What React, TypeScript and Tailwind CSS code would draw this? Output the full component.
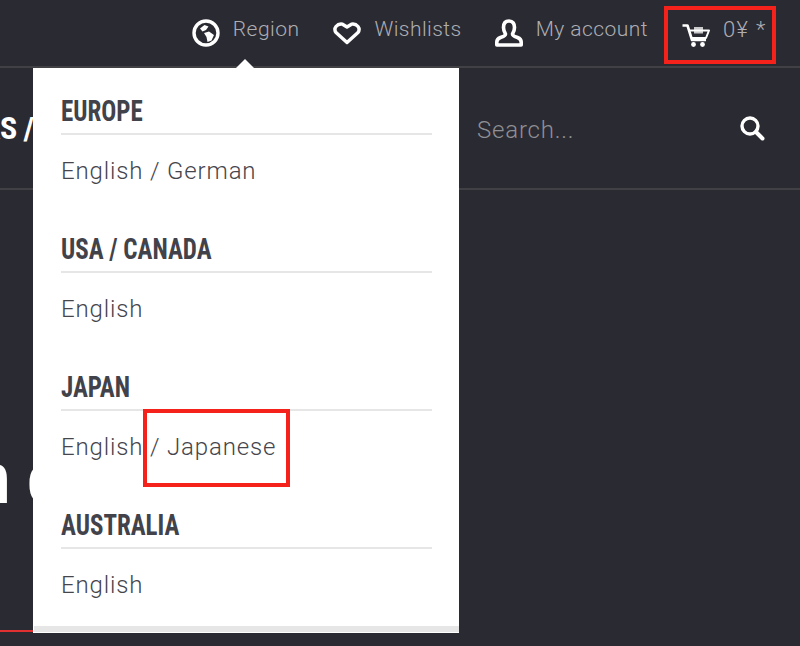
import React from 'react';

const bodyFont = "font-['Roboto','Liberation_Sans',sans-serif] font-light";
const headFont = "font-['Liberation_Sans_Narrow','Roboto_Condensed','Liberation_Sans',sans-serif] font-bold";

const regions = [
  { name: 'EUROPE', langs: 'English / German' },
  { name: 'USA / CANADA', langs: 'English' },
  { name: 'JAPAN', langs: 'English / Japanese' },
  { name: 'AUSTRALIA', langs: 'English' },
];

const GlobeIcon = () => (
  <svg width="28" height="28" viewBox="0 0 28 28" fill="none">
    <circle cx="14" cy="14" r="12" stroke="white" strokeWidth="3.4" />
    <path d="M8 9.5 L12.5 6 L16.5 7.5 L14 11 L10.5 12.5 Z" fill="white" />
    <path d="M12 14 L17 12.5 L22 16 L19.5 21.5 L15.5 23 L14.5 18 Z" fill="white" />
  </svg>
);

const HeartIcon = () => (
  <svg width="28" height="23" viewBox="0 0 28 23" fill="none">
    <path d="M14 20.5 L3 10.5 Q0.8 7.5 3 4.5 Q5.5 1.5 9.5 2.2 L14 5 L18.5 2.2 Q22.5 1.5 25 4.5 Q27.2 7.5 25 10.5 Z" stroke="white" strokeWidth="3.4" strokeLinejoin="round" />
  </svg>
);

const UserIcon = () => (
  <svg width="28" height="28" viewBox="0 0 28 28" fill="none">
    <path d="M14 2 C10 2 8.5 5 8.5 8.5 C8.5 11.5 9.5 13.5 10.5 15 C10.5 17 8.5 17.5 5.5 18.5 C2.8 19.5 1.8 21 1.8 23 L1.8 26 L26.2 26 L26.2 23 C26.2 21 25.2 19.5 22.5 18.5 C19.5 17.5 17.5 17 17.5 15 C18.5 13.5 19.5 11.5 19.5 8.5 C19.5 5 18 2 14 2 Z" stroke="white" strokeWidth="3.6" strokeLinejoin="round" />
  </svg>
);

const CartIcon = () => (
  <svg width="28" height="23" viewBox="0 0 28 23" fill="none">
    <path d="M0.5 1.5 L5.5 1.5 L10 16 L24 16" stroke="white" strokeWidth="2.6" strokeLinejoin="round" />
    <path d="M7 6.5 L27 6.5 L24 14 L9.5 14" stroke="white" strokeWidth="2" strokeLinejoin="round" />
    <rect x="12" y="3" width="9" height="6.5" fill="white" opacity="0.75" />
    <circle cx="11.5" cy="20.5" r="2.4" fill="white" />
    <circle cx="20.5" cy="20.5" r="2.4" fill="white" />
  </svg>
);

const SearchIcon = () => (
  <svg width="26" height="26" viewBox="0 0 26 26" fill="none">
    <circle cx="11" cy="11" r="8" stroke="white" strokeWidth="3.4" />
    <path d="M17 17 L23.5 23.5" stroke="white" strokeWidth="4" strokeLinecap="round" />
  </svg>
);

const TopLink = ({ icon, label }: { icon: React.ReactNode; label: string }) => (
  <div className="flex items-center gap-[13px]">
    {icon}
    <span className={`${bodyFont} -mt-[7px] text-[21px] leading-none tracking-[0.45px] text-[#aeaeb2]`}>{label}</span>
  </div>
);

export default function App() {
  return (
    <div className="relative flex h-[646px] w-[800px] flex-col overflow-hidden bg-[#2a2a32]">
      <header className="flex h-[68px] shrink-0 items-center justify-end border-b-2 border-[#404045] pr-[24px]">
        <div className="flex items-center gap-[33px]">
          <div className="mr-px">
            <TopLink icon={<GlobeIcon />} label="Region" />
          </div>
          <TopLink icon={<HeartIcon />} label="Wishlists" />
          <TopLink icon={<UserIcon />} label="My account" />
          <div className="-ml-[17px] mt-[4px] flex h-[58px] w-[112px] items-center gap-[13px] border-[4px] border-[#f5211b] pl-[14px]">
            <CartIcon />
            <span className={`${bodyFont} -mt-[10px] text-[22px] leading-none tracking-[1.4px] text-[#aeaeb2]`}>0¥ *</span>
          </div>
        </div>
      </header>

      <div className="flex h-[122px] shrink-0 items-center justify-between border-b-2 border-[#404045] pr-[35px]">
        <span className={`${headFont} -ml-[17px] text-[32px] leading-none tracking-[-0.6px] text-white`}>RS /</span>
        <div className="flex w-[288px] items-center justify-between">
          <span className={`${bodyFont} mt-[3px] text-[24px] leading-none tracking-[0.8px] text-[#8f8f94]`}>Search...</span>
          <SearchIcon />
        </div>
      </div>

      <main className="flex-1 pt-[253px]">
        <span className={`${headFont} -ml-[25px] block text-[72px] leading-[72px] text-white`}>n c</span>
      </main>

      <div className="absolute bottom-[14px] left-0 h-[2px] w-[33px] bg-[#e03030]" />

      {/* region dropdown */}
      <div className="absolute left-[33px] top-[68px] flex h-[565px] w-[426px] flex-col border-b border-white bg-white">
        <div className="absolute -top-[9px] left-[202px] h-0 w-0 border-x-[10px] border-b-[10px] border-x-transparent border-b-white" />
        <div className="flex-1 pl-[28px] pr-[27px]">
          {regions.map((r) => (
            <section key={r.name} className="h-[138px] pt-[27px]">
              <div className="h-[40px] border-b-2 border-[#e6e6e6]">
                <h3 className={`${headFont} inline-block origin-left scale-x-[0.86] whitespace-nowrap text-[29px] leading-[32px] text-[#42424a]`}>{r.name}</h3>
              </div>
              <p className={`${bodyFont} mt-[22px] text-[24px] leading-[28px] tracking-[0.85px] text-[#45454c]`}>{r.langs}</p>
            </section>
          ))}
        </div>
        <div className="ml-px h-[6px] bg-[#e6e6e6]" />
      </div>

      {/* annotation */}
      <div className="absolute left-[143px] top-[409px] h-[78px] w-[147px] border-[4px] border-[#f5211b]" />
    </div>
  );
}
